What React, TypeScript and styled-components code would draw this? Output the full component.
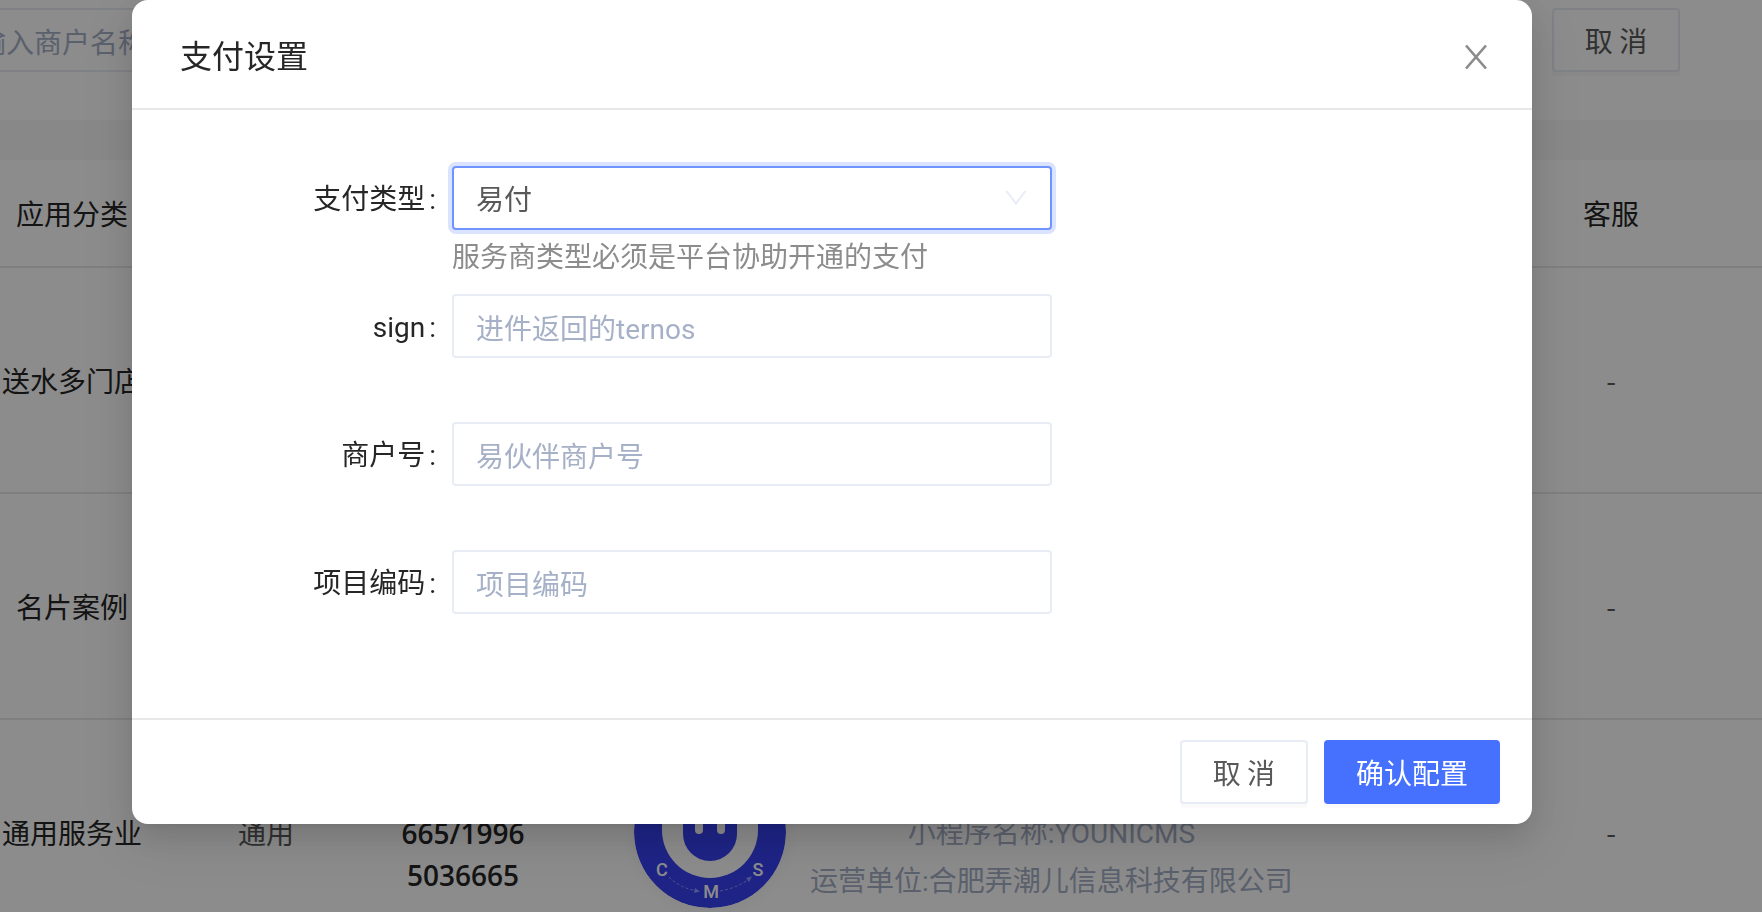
import React from 'react';
import styled, { createGlobalStyle } from 'styled-components';

const mixedFont = 'Roboto, "Noto Sans CJK SC", sans-serif';

const GlobalStyle = createGlobalStyle`
  *, *::before, *::after { box-sizing: border-box; }
  body {
    margin: 0;
    overflow: hidden;
    font-family: "Noto Sans CJK SC", sans-serif;
    font-size: 28px;
    line-height: 44px;
    color: #595959;
    background: #ffffff;
  }
`;

const Page = styled.main`
  height: 100vh;
  overflow: hidden;
  background: #f7f7f7;
`;

const FilterBar = styled.div`
  display: flex;
  justify-content: space-between;
  height: 120px;
  padding: 8px 82px 0 0;
  background: #ffffff;
`;

const TextInput = styled.input`
  width: 600px;
  max-width: 100%;
  height: 64px;
  padding: 6px 22px 0;
  border: 2px solid #e8ecf5;
  border-radius: 4px;
  background: #ffffff;
  font-family: ${mixedFont};
  font-size: 28px;
  color: #595959;
  outline: none;

  &::placeholder {
    color: #a6b0c7;
    opacity: 1;
  }
`;

const SearchInput = styled(TextInput)`
  width: 400px;
  margin-left: -74px;
`;

const Button = styled.button<{ $primary?: boolean }>`
  min-width: 128px;
  height: 64px;
  padding: 0 30px;
  border: 2px solid ${(p) => (p.$primary ? '#4671ff' : '#e8ecf5')};
  border-radius: 4px;
  background: ${(p) => (p.$primary ? '#4671ff' : '#ffffff')};
  box-shadow: 0 4px 0 rgba(0, 0, 0, 0.02);
  color: ${(p) => (p.$primary ? '#ffffff' : '#595959')};
  font: inherit;
  white-space: nowrap;
  cursor: pointer;
`;

const Table = styled.table`
  width: 100%;
  margin-top: 40px;
  border-collapse: separate;
  border-spacing: 0;
  table-layout: fixed;
  background: #ffffff;
`;

const Col = styled.col<{ $width?: number }>`
  width: ${(p) => (p.$width ? `${p.$width}px` : 'auto')};
`;

const HeadCell = styled.th`
  height: 108px;
  padding: 0;
  border-bottom: 2px solid #e8e8e8;
  color: #262626;
  font-weight: 400;
  white-space: nowrap;
`;

const Cell = styled.td<{ $strong?: boolean }>`
  height: 226px;
  padding: 0;
  border-bottom: 2px solid #e8e8e8;
  color: ${(p) => (p.$strong ? '#262626' : '#595959')};
  text-align: center;
  white-space: nowrap;
`;

const CodeText = styled.div`
  padding-top: 44px;
  font-family: "Open Sans", sans-serif;
  line-height: 42px;
  font-weight: 600;
  color: #262626;
`;

const AppInfo = styled.div`
  display: flex;
  align-items: center;
  gap: 24px;
  padding-left: 96px;
`;

const AppText = styled.div`
  padding-top: 52px;
  font-family: ${mixedFont};
  line-height: 48px;
  color: #a6b0c7;
`;

const LogoSvg = styled.svg`
  flex: none;
  border-radius: 50%;
  box-shadow: 0 0 16px rgba(0, 0, 0, 0.06);
`;

const Overlay = styled.div`
  position: fixed;
  inset: 0;
  padding: 0 230px 0 132px;
  background: rgba(0, 0, 0, 0.45);
`;

const Dialog = styled.section`
  border-radius: 16px;
  background: #ffffff;
  box-shadow:
    0 6px 12px -8px rgba(0, 0, 0, 0.12),
    0 12px 32px rgba(0, 0, 0, 0.12),
    0 18px 56px 16px rgba(0, 0, 0, 0.06);
`;

const DialogHeader = styled.header`
  display: flex;
  align-items: center;
  justify-content: space-between;
  height: 110px;
  padding: 0 40px 0 48px;
  border-bottom: 2px solid #e8e8e8;
`;

const DialogTitle = styled.h2`
  margin: 0;
  font-size: 32px;
  font-weight: 400;
  line-height: 44px;
  color: #262626;
`;

const CloseButton = styled.button`
  display: flex;
  align-items: center;
  justify-content: center;
  width: 32px;
  height: 32px;
  margin-top: 6px;
  padding: 0;
  border: 0;
  background: none;
  color: #8c8c8c;
  cursor: pointer;
`;

const Form = styled.form`
  padding: 56px 48px 40px;
`;

const FormItem = styled.div`
  display: grid;
  grid-template-columns: 272px minmax(0, 600px);
  min-height: 128px;
  align-content: start;
`;

const Label = styled.label`
  height: 64px;
  padding-right: 16px;
  font-family: ${mixedFont};
  line-height: 68px;
  text-align: right;
  color: #262626;

  &::after {
    content: ":";
    margin-left: 4px;
  }
`;

const SelectBox = styled.div`
  position: relative;
`;

const Select = styled.select`
  display: block;
  width: 100%;
  height: 64px;
  padding: 0 22px;
  border: 2px solid #7094ff;
  border-radius: 4px;
  appearance: none;
  background: #ffffff;
  box-shadow: 0 0 0 4px rgba(70, 113, 255, 0.2);
  font: inherit;
  color: #595959;
  outline: none;
`;

const SelectArrow = styled.svg`
  position: absolute;
  top: 24px;
  right: 24px;
  pointer-events: none;
`;

const HelpText = styled.p`
  grid-column: 2;
  margin: 3px 0 0;
  line-height: 44px;
  color: #8c8c8c;
`;

const DialogFooter = styled.footer`
  display: flex;
  justify-content: flex-end;
  gap: 16px;
  padding: 20px 32px;
  border-top: 2px solid #e8e8e8;
`;

const fields = [
  { id: 'sign', label: 'sign', placeholder: '进件返回的ternos' },
  { id: 'merchant', label: '商户号', placeholder: '易伙伴商户号' },
  { id: 'project', label: '项目编码', placeholder: '项目编码' },
];

function CmsLogo() {
  return (
    <LogoSvg width="152" height="152" viewBox="0 0 152 152" aria-label="CMS">
      <circle cx="76" cy="76" r="76" fill="#3741f5" />
      <path d="M28 30H124V74A48 48 0 0 1 28 74Z" fill="#ffffff" />
      <path d="M49 30H103V78A27 27 0 0 1 49 78Z" fill="#3741f5" />
      <rect x="61" y="56" width="8" height="22" rx="4" fill="#ffffff" />
      <rect x="83" y="56" width="8" height="22" rx="4" fill="#ffffff" />
      <g fill="none" stroke="#8f9bff" strokeWidth="1" strokeDasharray="3 2">
        <path d="M35 121Q46 132 63 135" />
        <path d="M86 135Q103 132 115 123" />
      </g>
      <path d="M61 132L66 135.500L60 137ZM112 122L118 120.500L115 126Z" fill="#8f9bff" />
      <g
        fill="#ffffff"
        fontFamily="Roboto, sans-serif"
        fontSize="18"
        fontWeight="500"
        textAnchor="middle"
      >
        <text x="28" y="120">C</text>
        <text x="77" y="142">M</text>
        <text x="124" y="120">S</text>
      </g>
    </LogoSvg>
  );
}

export default function App() {
  return (
    <>
      <GlobalStyle />
      <Page>
        <FilterBar>
          <SearchInput aria-label="商户名称" placeholder="请输入商户名称" />
          <Button type="button">取 消</Button>
        </FilterBar>
        <Table>
          <colgroup>
            <Col $width={144} />
            <Col $width={244} />
            <Col $width={150} />
            <Col $width={922} />
            <Col />
          </colgroup>
          <thead>
            <tr>
              <HeadCell>应用分类</HeadCell>
              <HeadCell />
              <HeadCell />
              <HeadCell />
              <HeadCell>客服</HeadCell>
            </tr>
          </thead>
          <tbody>
            <tr>
              <Cell $strong>送水多门店</Cell>
              <Cell />
              <Cell />
              <Cell />
              <Cell>-</Cell>
            </tr>
            <tr>
              <Cell $strong>名片案例</Cell>
              <Cell />
              <Cell />
              <Cell />
              <Cell>-</Cell>
            </tr>
            <tr>
              <Cell $strong>通用服务业</Cell>
              <Cell>通用</Cell>
              <Cell>
                <CodeText>
                  665/1996
                  <br />
                  5036665
                </CodeText>
              </Cell>
              <Cell>
                <AppInfo>
                  <CmsLogo />
                  <AppText>
                    小程序名称:YOUNICMS
                    <br />
                    运营单位:合肥弄潮儿信息科技有限公司
                  </AppText>
                </AppInfo>
              </Cell>
              <Cell>-</Cell>
            </tr>
          </tbody>
        </Table>
      </Page>

      <Overlay>
        <Dialog role="dialog" aria-modal="true" aria-labelledby="dialog-title">
          <DialogHeader>
            <DialogTitle id="dialog-title">支付设置</DialogTitle>
            <CloseButton type="button" aria-label="关闭">
              <svg width="22" height="24" viewBox="0 0 22 24" fill="none" stroke="currentColor" strokeWidth="2.600">
                <path d="M1 0.500L21 23.500M21 0.500L1 23.500" />
              </svg>
            </CloseButton>
          </DialogHeader>
          <Form>
            <FormItem>
              <Label htmlFor="pay-type">支付类型</Label>
              <SelectBox>
                <Select id="pay-type" defaultValue="yifu">
                  <option value="yifu">易付</option>
                </Select>
                <SelectArrow width="24" height="16" viewBox="0 0 24 16" fill="none" stroke="#e8ecf5" strokeWidth="2">
                  <path d="M2.500 1L12 13.500L21.500 1" />
                </SelectArrow>
              </SelectBox>
              <HelpText>服务商类型必须是平台协助开通的支付</HelpText>
            </FormItem>
            {fields.map((f) => (
              <FormItem key={f.id}>
                <Label htmlFor={f.id}>{f.label}</Label>
                <TextInput id={f.id} placeholder={f.placeholder} />
              </FormItem>
            ))}
          </Form>
          <DialogFooter>
            <Button type="button">取 消</Button>
            <Button type="button" $primary>
              确认配置
            </Button>
          </DialogFooter>
        </Dialog>
      </Overlay>
    </>
  );
}
